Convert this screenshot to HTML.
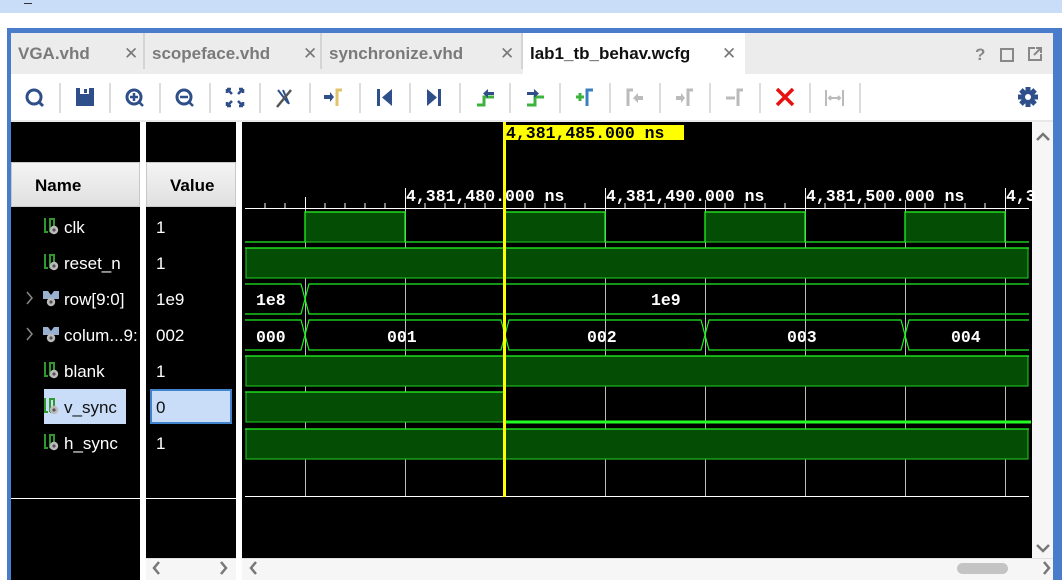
<!DOCTYPE html>
<html><head><meta charset="utf-8"><style>
*{margin:0;padding:0;box-sizing:border-box}
body{width:1062px;height:580px;overflow:hidden;background:#fff;font-family:"Liberation Sans",sans-serif;position:relative}
.abs{position:absolute}
.tab{position:absolute;top:33px;height:41px;font-size:17px;font-weight:bold;color:#7a7a7a;line-height:41px;padding-left:7px}
.x{position:absolute;top:0;font-weight:normal;color:#777;font-size:17px}
.sep{position:absolute;top:83px;width:2px;height:30px;background:#dcdcdc}
.nm{position:absolute;left:64px;font-size:17px;color:#fff;height:24px;line-height:24px}
.vl{position:absolute;left:156px;font-size:17px;color:#fff;line-height:24px}
</style></head><body>
<div class="abs" style="left:0;top:0;width:1062px;height:13px;background:#c9dcf8"></div>
<div class="abs" style="left:24px;top:3px;width:8px;height:1px;background:#333"></div>
<div class="abs" style="left:7px;top:28px;width:1055px;height:552px;background:#4a7ccc"></div>
<div class="abs" style="left:11px;top:33px;width:1042px;height:547px;background:#fff"></div>
<div class="abs" style="left:11px;top:33px;width:1042px;height:41px;background:#ececec"></div>
<div class="tab" style="left:11px;width:132px">VGA.vhd<span class="x" style="left:113px">✕</span></div>
<div class="abs" style="left:143px;top:33px;width:2px;height:36px;background:#d4d4d4"></div>
<div class="tab" style="left:145px;width:175px">scopeface.vhd<span class="x" style="left:158px">✕</span></div>
<div class="abs" style="left:320px;top:33px;width:2px;height:36px;background:#d4d4d4"></div>
<div class="tab" style="left:322px;width:200px">synchronize.vhd<span class="x" style="left:178px">✕</span></div>
<div class="abs" style="left:521px;top:33px;width:2px;height:36px;background:#d4d4d4"></div>
<div class="tab" style="left:523px;width:222px;background:#fff;color:#111">lab1_tb_behav.wcfg<span class="x" style="left:199px">✕</span></div>
<div class="abs" style="left:975px;top:45px;font-size:17px;font-weight:bold;color:#888">?</div>
<div class="abs" style="left:1000px;top:48px;width:14px;height:14px;border:2px solid #888"></div>
<svg class="abs" style="left:1027px;top:46px" width="16" height="16"><path d="M8 2H2v12h12V8" fill="none" stroke="#888" stroke-width="2"/><path d="M7 9l6-6M9 2h5v5" fill="none" stroke="#888" stroke-width="2"/></svg>
<div class="sep" style="left:59px"></div><div class="sep" style="left:109px"></div><div class="sep" style="left:159px"></div><div class="sep" style="left:209px"></div><div class="sep" style="left:259px"></div><div class="sep" style="left:309px"></div><div class="sep" style="left:359px"></div><div class="sep" style="left:409px"></div><div class="sep" style="left:459px"></div><div class="sep" style="left:509px"></div><div class="sep" style="left:559px"></div><div class="sep" style="left:609px"></div><div class="sep" style="left:659px"></div><div class="sep" style="left:709px"></div><div class="sep" style="left:759px"></div><div class="sep" style="left:809px"></div><div class="sep" style="left:859px"></div>
<svg class="abs" style="left:0;top:80px" width="1062" height="36">
<g fill="none" stroke="#2f4f8a" stroke-width="3">
<circle cx="34" cy="17" r="7"/><path d="M39 22l4 4"/>
<circle cx="134" cy="17" r="7"/><path d="M139 22l4 4M130 17h8M134 13v8" stroke-width="2.5"/>
<circle cx="184" cy="17" r="7"/><path d="M189 22l4 4M180 17h8" stroke-width="2.5"/>
<path d="M227 9l5 5M243 9l-5 5M227 26l5-5M243 26l-5-5M227 9h4M227 9v4M243 9h-4M243 9v4M227 26h4M227 26v-4M243 26h-4M243 26v-4" stroke-width="2.5"/>
</g>
<path d="M76 8h18v18H76z" fill="#2f4f8a"/><rect x="80" y="8" width="9" height="6" fill="#fff"/><rect x="84" y="9" width="3" height="4" fill="#2f4f8a"/>
<path d="M278 10l10 13M283 10l6 14" stroke="#2f4f8a" stroke-width="2" fill="none"/><path d="M277 27l14-17" stroke="#555" stroke-width="2.5"/>
<path d="M324 15h6v-3l4 5-4 5v-3h-6z" fill="#2f4f8a"/><path d="M337 26V10h5" stroke="#e0c26a" stroke-width="3" fill="none"/>
<rect x="377" y="9" width="3" height="17" fill="#2f4f8a"/><path d="M392 9v17l-10-8.5z" fill="#2f4f8a"/>
<rect x="438" y="9" width="3" height="17" fill="#2f4f8a"/><path d="M427 9v17l10-8.5z" fill="#2f4f8a"/>
<path d="M477 25h7v-8h10" stroke="#3db33d" stroke-width="3" fill="none"/><path d="M494 12h-6v-3l-5 4.5 5 4.5v-3h6z" fill="#2f4f8a"/>
<path d="M527 25h8v-8h9" stroke="#3db33d" stroke-width="3" fill="none"/><path d="M527 12h7v-3l5 4.5-5 4.5v-3h-7z" fill="#2f4f8a"/>
<path d="M576 17h8M580 13v8" stroke="#3db33d" stroke-width="3"/><path d="M587 26V10h6" stroke="#3a7fc0" stroke-width="3" fill="none"/>
<path d="M628 26V10h5" stroke="#bbb" stroke-width="3" fill="none"/><path d="M643 16h-5v-3l-5 5 5 5v-3h5z" fill="#bbb"/>
<path d="M676 16h5v-3l4 5-4 5v-3h-5z" fill="#bbb"/><path d="M688 26V10h5" stroke="#bbb" stroke-width="3" fill="none"/>
<path d="M726 18h9" stroke="#bbb" stroke-width="3"/><path d="M738 26V10h5" stroke="#bbb" stroke-width="3" fill="none"/>
<path d="M777 9l16 16M793 9L777 25" stroke="#e81010" stroke-width="3.5"/>
<path d="M826 10v16M843 10v16M829 18h11M831 16l-2 2 2 2M838 16l2 2-2 2" stroke="#bbb" stroke-width="2" fill="none"/>
<g transform="translate(1028 17)" fill="#2f4f8a"><circle r="7"/><g><rect x="-2.5" y="-10" width="5" height="20"/><rect x="-10" y="-2.5" width="20" height="5"/><rect x="-2.5" y="-10" width="5" height="20" transform="rotate(45)"/><rect x="-2.5" y="-10" width="5" height="20" transform="rotate(-45)"/></g><circle r="3" fill="#fff"/></g>
</svg>
<div class="abs" style="left:11px;top:120px;width:1042px;height:2px;background:#e8e8e8"></div>
<div class="abs" style="left:11px;top:122px;width:129px;height:458px;background:#000"></div>
<div class="abs" style="left:146px;top:122px;width:90px;height:436px;background:#000"></div>
<div class="abs" style="left:242px;top:122px;width:790px;height:436px;background:#000"></div>
<div class="abs" style="left:1032px;top:122px;width:21px;height:436px;background:#f6f6f6"></div>
<div class="abs" style="left:146px;top:558px;width:90px;height:22px;background:#f6f6f6;border-top:1px solid #e0e0e0"></div>
<div class="abs" style="left:242px;top:558px;width:811px;height:22px;background:#f6f6f6;border-top:1px solid #e0e0e0"></div>
<div class="abs" style="left:957px;top:563px;width:51px;height:11px;border-radius:6px;background:#c4c4c4"></div>
<svg class="abs" style="left:0;top:0" width="1062" height="580"><g fill="none" stroke="#777" stroke-width="2.5">
<path d="M159 562l-5 6 5 6M221 562l5 6-5 6M256 562l-5 6 5 6M1044 562l5 6-5 6M1037 140l6-6 6 6M1037 545l6 6 6-6"/></g>
<g stroke="#888" stroke-width="1.5" fill="none"><path d="M27 292l5 6-5 6M27 328l5 6-5 6"/></g></svg>
<div class="abs" style="left:11px;top:162px;width:129px;height:45px;background:linear-gradient(#f4f4f4,#e0e0e0);border:1px solid #c8c8c8;font-weight:bold;font-size:17px;line-height:45px;padding-left:23px">Name</div>
<div class="abs" style="left:146px;top:162px;width:90px;height:45px;background:linear-gradient(#f4f4f4,#e0e0e0);border:1px solid #c8c8c8;font-weight:bold;font-size:17px;line-height:45px;padding-left:23px">Value</div>
<div class="abs" style="left:44px;top:389px;width:82px;height:35px;background:#c9dcf8"></div>
<div class="abs" style="left:150px;top:389px;width:82px;height:35px;background:#c9dcf8;border:2px solid #3f84cc"></div>
<div class="abs" style="left:11px;top:498px;width:129px;height:1px;background:#fff"></div>
<div class="abs" style="left:146px;top:498px;width:90px;height:1px;background:#fff"></div>
<svg class="abs" style="left:0;top:0" width="240" height="580">
<defs><g id="b"><path d="M1 0v14h3M6 0v14M6 1h4v13H6" stroke="#2e9a2e" stroke-width="2" fill="none"/><circle cx="10" cy="12" r="4.2" fill="#bbb"/><circle cx="10" cy="12" r="1.6" fill="#555"/></g>
<g id="v"><path d="M0 0h5l3 4 3-4h5v8H0z" fill="#9ab0d0"/><circle cx="8" cy="11" r="4.2" fill="#bbb"/><circle cx="8" cy="11" r="1.6" fill="#555"/></g></defs>
<use href="#b" x="44" y="218"/><use href="#b" x="44" y="254"/><use href="#v" x="43" y="291"/><use href="#v" x="43" y="327"/><use href="#b" x="44" y="362"/><use href="#b" x="44" y="398"/><use href="#b" x="44" y="434"/>
</svg>
<div class="nm" style="top:216px">clk</div><div class="nm" style="top:252px">reset_n</div><div class="nm" style="top:288px">row[9:0]</div><div class="nm" style="top:324px">colum...9:</div><div class="nm" style="top:360px">blank</div><div class="nm" style="top:396px;color:#111">v_sync</div><div class="nm" style="top:432px">h_sync</div>
<div class="vl" style="top:216px">1</div><div class="vl" style="top:252px">1</div><div class="vl" style="top:288px">1e9</div><div class="vl" style="top:324px">002</div><div class="vl" style="top:360px">1</div><div class="vl" style="top:396px;color:#111">0</div><div class="vl" style="top:432px">1</div>
<svg class="abs" style="left:0;top:0" width="1062" height="580" font-family="Liberation Mono,monospace" font-weight="bold" font-size="16.5">
<g stroke="#bbb" stroke-width="1"><path d="M305.5 200V497M405.5 200V497M505.5 200V497M605.5 200V497M705.5 200V497M805.5 200V497M905.5 200V497M1005.5 200V497"/></g>
<path d="M245 208.5H1029" stroke="#fff"/>
<g stroke="#fff"><path d="M265 203v5M285 203v5M325 203v5M345 203v5M365 203v5M385 203v5M425 203v5M445 203v5M465 203v5M485 203v5M525 203v5M545 203v5M565 203v5M585 203v5M625 203v5M645 203v5M665 203v5M685 203v5M725 203v5M745 203v5M765 203v5M785 203v5M825 203v5M845 203v5M865 203v5M885 203v5M925 203v5M945 203v5M965 203v5M985 203v5M305.5 197v11M405.5 188v20M605.5 188v20M805.5 188v20M1005.5 188v20"/></g>
<g fill="#fff"><text x="406" y="201">4,381,480.000 ns</text><text x="606" y="201">4,381,490.000 ns</text><text x="806" y="201">4,381,500.000 ns</text><text x="1006" y="201">4,3</text></g>
<g fill="#044d04" stroke="#1fb51f" stroke-width="1.2">
<rect x="305" y="212" width="100" height="30"/><rect x="505" y="212" width="100" height="30"/><rect x="705" y="212" width="100" height="30"/><rect x="905" y="212" width="100" height="30"/>
<rect x="246" y="248" width="782" height="30"/><rect x="246" y="356" width="782" height="30"/><rect x="246" y="392" width="259" height="30"/><rect x="246" y="429" width="782" height="30"/></g>
<g stroke="#22ee22" stroke-width="1.2" fill="none">
<path d="M245 242H305V212H405V242H505V212H605V242H705V212H805V242H905V212H1005V242H1029"/>
<path d="M245 248H1029"/><path d="M245 356H1029"/><path d="M245 392H505"/><path d="M245 429H1029"/>
<path d="M245 284H301L305 299L309 284H1029M245 314H301L305 299L309 314H1029"/>
<path d="M245 320H301L305 335L309 320H501L505 335L509 320H701L705 335L709 320H901L905 335L909 320H1029M245 350H301L305 335L309 350H501L505 335L509 350H701L705 335L709 350H901L905 335L909 350H1029"/>
</g>
<path d="M505 422H1031" stroke="#22ff22" stroke-width="3"/>
<g fill="#fff"><text x="256" y="305">1e8</text><text x="651" y="305">1e9</text><text x="256" y="342">000</text><text x="387" y="342">001</text><text x="587" y="342">002</text><text x="787" y="342">003</text><text x="951" y="342">004</text></g>
<path d="M245 496.5H1029" stroke="#fff"/>
<rect x="503" y="122" width="3" height="375" fill="#ffff00"/>
<rect x="505" y="125" width="179" height="15" fill="#ffff00"/><text x="506" y="138" fill="#000" font-size="16.5">4,381,485.000 ns</text>
</svg>
</body></html>
